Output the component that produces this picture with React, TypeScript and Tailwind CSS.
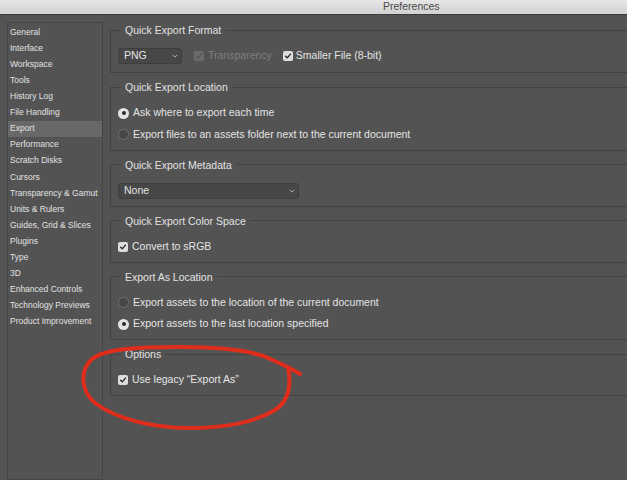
import React from 'react';

const sections = [
  'General',
  'Interface',
  'Workspace',
  'Tools',
  'History Log',
  'File Handling',
  'Export',
  'Performance',
  'Scratch Disks',
  'Cursors',
  'Transparency & Gamut',
  'Units & Rulers',
  'Guides, Grid & Slices',
  'Plugins',
  'Type',
  '3D',
  'Enhanced Controls',
  'Technology Previews',
  'Product Improvement',
];

const Check = ({ checked = true, disabled = false }: { checked?: boolean; disabled?: boolean }) => (
  <span
    className={`flex h-[10px] w-[10px] shrink-0 items-center justify-center rounded-[2px] ${
      disabled ? 'bg-[#6a6a6a]' : 'bg-[#dedede]'
    }`}
  >
    {checked && (
      <svg viewBox="0 0 10 10" className="h-[8px] w-[8px]">
        <path
          d="M2 5.2 L4.1 7.3 L8 2.6"
          fill="none"
          stroke={disabled ? '#565656' : '#2a2a2a'}
          strokeWidth="1.7"
          strokeLinecap="round"
          strokeLinejoin="round"
        />
      </svg>
    )}
  </span>
);

const Radio = ({ on }: { on: boolean }) =>
  on ? (
    <span className="flex h-[11px] w-[11px] shrink-0 items-center justify-center rounded-full bg-[#e4e4e4]">
      <span className="h-[4px] w-[4px] rounded-full bg-[#2c2c2c]" />
    </span>
  ) : (
    <span className="h-[11px] w-[11px] shrink-0 rounded-full border border-[#707070] bg-[#474747]" />
  );

const Chevron = () => (
  <svg viewBox="0 0 8 5" className="h-[4px] w-[6px]">
    <path d="M1 1 L4 4 L7 1" fill="none" stroke="#c8c8c8" strokeWidth="1.1" />
  </svg>
);

const Group = ({
  title,
  bottom = 'pb-[5px]',
  children,
}: {
  title: string;
  bottom?: string;
  children: React.ReactNode;
}) => (
  <fieldset className={`border border-[#434343] pl-[7px] pt-[10px] ${bottom}`}>
    <legend className="ml-[3px] px-1 text-[10.5px] leading-[12px] text-[#e2e2e2]">{title}</legend>
    {children}
  </fieldset>
);

const Row = ({ children }: { children: React.ReactNode }) => (
  <div className="flex h-5 items-center gap-[4px] text-[10.5px] text-[#e4e4e4]">{children}</div>
);

export default function App() {
  return (
    <div
      className="relative h-[480px] w-[627px] overflow-hidden bg-[#535353]"
      style={{ fontFamily: '"Liberation Sans", Arial, sans-serif' }}
    >
      {/* title bar */}
      <div className="flex h-[15px] items-center border-b border-[#3b3b3b] bg-gradient-to-b from-[#e6e6e6] to-[#d2d2d2] pl-[383px] text-[10.5px] text-[#4a4a4a]">
        Preferences
      </div>

      <div className="flex h-[465px]">
        {/* sidebar */}
        <div className="ml-[7px] mt-[7px] w-[96px] shrink-0 border border-[#444444] pt-[1px]">
          {sections.map((s) => (
            <div
              key={s}
              className={`flex h-[16.1px] items-center pl-[2px] text-[8.5px] text-[#e2e2e2] ${
                s === 'Export' ? 'bg-[#686868]' : ''
              }`}
            >
              {s}
            </div>
          ))}
        </div>

        {/* settings */}
        <div className="ml-[7px] mt-[9px] flex w-[530px] shrink-0 flex-col gap-[8px]">
          <Group title="Quick Export Format" bottom="pb-[6px]">
            <Row>
              <div className="flex h-4 w-[64px] items-center justify-between rounded-[3px] border border-[#3e3e3e] bg-[#474747] pl-[5px] pr-[3px]">
                <span>PNG</span>
                <Chevron />
              </div>
              <div className="ml-[8px] flex items-center gap-[4px] text-[#7e7e7e]">
                <Check disabled />
                <span>Transparency</span>
              </div>
              <div className="ml-[7px] flex items-center gap-[3px]">
                <Check />
                <span>Smaller File (8-bit)</span>
              </div>
            </Row>
          </Group>

          <Group title="Quick Export Location">
            <div className="flex flex-col gap-[1.5px]">
              <Row>
                <Radio on />
                <span>Ask where to export each time</span>
              </Row>
              <Row>
                <Radio on={false} />
                <span>Export files to an assets folder next to the current document</span>
              </Row>
            </div>
          </Group>

          <Group title="Quick Export Metadata">
            <Row>
              <div className="flex h-4 w-[181px] items-center justify-between rounded-[3px] border border-[#3e3e3e] bg-[#474747] pl-[5px] pr-[3px]">
                <span>None</span>
                <Chevron />
              </div>
            </Row>
          </Group>

          <Group title="Quick Export Color Space">
            <Row>
              <Check />
              <span>Convert to sRGB</span>
            </Row>
          </Group>

          <Group title="Export As Location">
            <div className="flex flex-col gap-[1.5px]">
              <Row>
                <Radio on={false} />
                <span>Export assets to the location of the current document</span>
              </Row>
              <Row>
                <Radio on />
                <span>Export assets to the last location specified</span>
              </Row>
            </div>
          </Group>

          <Group title="Options">
            <Row>
              <Check />
              <span>Use legacy “Export As”</span>
            </Row>
          </Group>
        </div>
      </div>

      {/* hand-drawn annotation */}
      <svg className="pointer-events-none absolute left-0 top-0" width="627" height="480">
        <path
          d="M288 367 C291 382 290 400 275 410 C255 422 225 428 190 428 C150 428 115 418 95 403 C80 390 80 370 92 359 C105 349 135 347 180 347 C220 347 250 350 268 358 C282 364 292 369 300 374"
          fill="none"
          stroke="#e02d1b"
          strokeWidth="4"
          strokeLinecap="round"
          strokeLinejoin="round"
        />
      </svg>
    </div>
  );
}
